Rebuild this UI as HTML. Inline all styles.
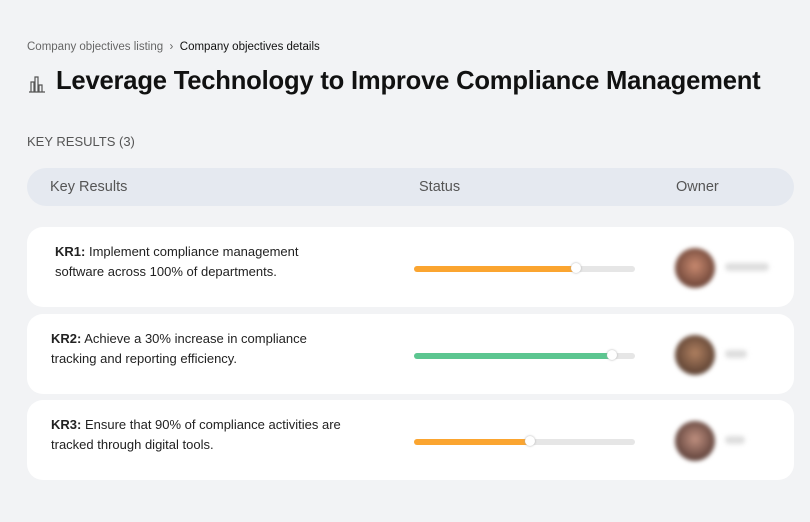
<!DOCTYPE html><html><head><style>
body{margin:0;width:810px;height:522px;background:#f2f3f5;font-family:"Liberation Sans",sans-serif;position:relative;overflow:hidden}
.a{position:absolute}
.bc{left:27px;top:41px;font-size:11.5px;color:#666}
.bc b{font-weight:normal;color:#111}
h1{position:absolute;left:56px;top:67px;margin:0;font-size:25.6px;font-weight:bold;color:#111;letter-spacing:-0.2px}
.kr{left:27px;top:134px;font-size:13px;color:#555}
.hd{left:27px;top:168px;width:767px;height:38px;background:#e5e9f0;border-radius:19px;font-size:14.5px;color:#555}
.hd span{position:absolute;top:11px}
.card{position:absolute;left:27px;width:767px;height:80px;background:#fff;border-radius:16px}
.t{position:absolute;left:24px;top:15px;font-size:13px;line-height:20px;color:#222;width:300px}
.bar{position:absolute;left:387px;top:39px;width:221px;height:6px;border-radius:3px;background:#e6e6e6}
.fill{position:absolute;left:0;top:0;height:6px;border-radius:3px}
.knob{position:absolute;top:-3px;width:10px;height:10px;border-radius:50%;background:#fff;box-shadow:0 0 2px #aaa}
.av{position:absolute;left:648px;top:21px;width:40px;height:40px;border-radius:50%;filter:blur(2px)}
.nm{position:absolute;left:698px;top:36px;width:44px;height:8px;background:#ddd;filter:blur(2.5px);border-radius:4px}
</style></head><body>
<div class="a bc">Company objectives listing &nbsp;›&nbsp; <b>Company objectives details</b></div>
<svg class="a" style="left:28px;top:75px" width="18" height="18" viewBox="0 0 18 18" fill="none" stroke="#555" stroke-width="1.2"><path d="M1 17h16M3 17V7h3v10M7 17V2h3v15M11 17V10h3v7"/></svg>
<h1>Leverage Technology to Improve Compliance Management</h1>
<div class="a kr">KEY RESULTS (3)</div>
<div class="a hd"><span style="left:23px">Key Results</span><span style="left:392px">Status</span><span style="left:649px">Owner</span></div>
<div class="card" style="top:227px"><div class="t" style="left:28px;width:275px"><b>KR1:</b> Implement compliance management software across 100% of departments.</div><div class="bar"><div class="fill" style="width:162px;background:#fba530"></div><div class="knob" style="left:157px"></div></div><div class="av" style="background:radial-gradient(circle at 50% 45%,#c98a70,#4a2a22)"></div><div class="nm"></div></div>
<div class="card" style="top:314px"><div class="t" style="width:285px"><b>KR2:</b> Achieve a 30% increase in compliance tracking and reporting efficiency.</div><div class="bar"><div class="fill" style="width:198px;background:#5cc690"></div><div class="knob" style="left:193px"></div></div><div class="av" style="background:radial-gradient(circle at 50% 45%,#b08060,#3d2a22)"></div><div class="nm" style="width:22px"></div></div>
<div class="card" style="top:400px"><div class="t" style="width:320px"><b>KR3:</b> Ensure that 90% of compliance activities are tracked through digital tools.</div><div class="bar"><div class="fill" style="width:116px;background:#fba530"></div><div class="knob" style="left:111px"></div></div><div class="av" style="background:radial-gradient(circle at 50% 45%,#c09080,#3a2420)"></div><div class="nm" style="width:20px"></div></div>
</body></html>
